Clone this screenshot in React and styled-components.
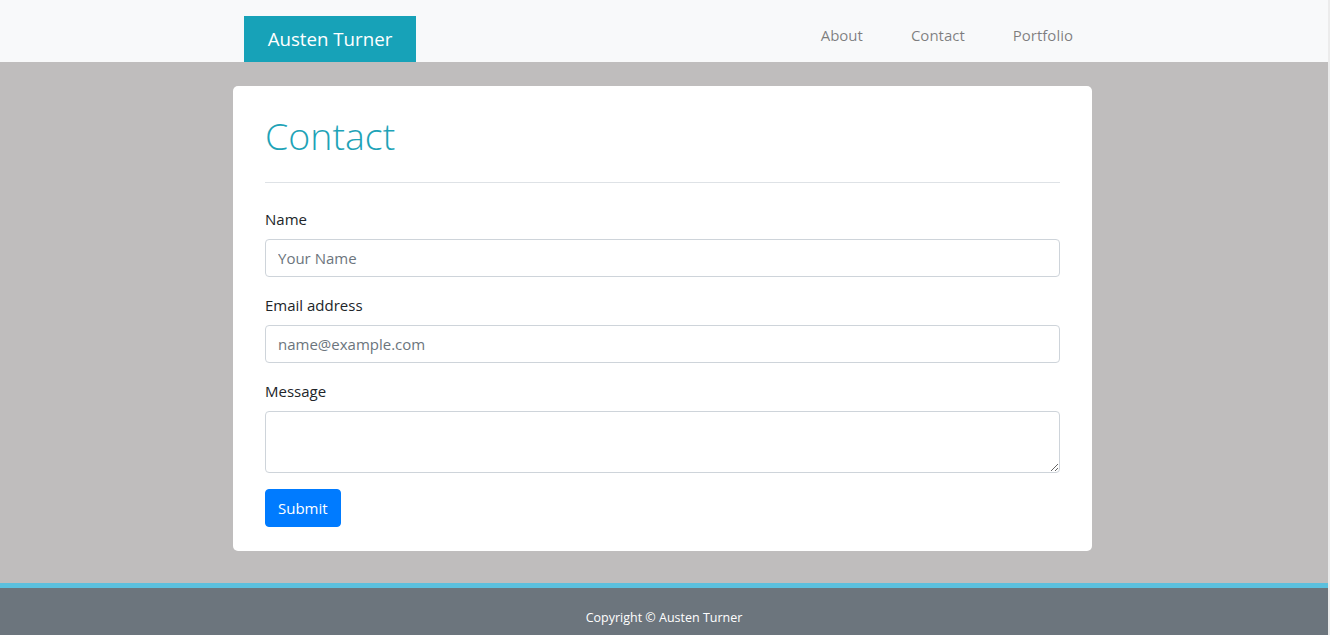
import styled, { createGlobalStyle } from 'styled-components'

const GlobalStyle = createGlobalStyle`
  * {
    box-sizing: border-box;
  }
  html {
    background: #ececec;
  }
  body {
    margin: 0 2px 0 0;
    font-family: 'Segoe UI', 'Open Sans', 'Liberation Sans', sans-serif;
    font-size: 15px;
    line-height: 24px;
    color: #212529;
    background: #bfbdbd;
  }
`

const Nav = styled.nav`
  background-color: #f8f9fa;
  height: 62px;
`
const NavInner = styled.div`
  width: 862px;
  height: 100%;
  margin: 0 auto;
  padding: 0 22px 0 11px;
  display: flex;
  justify-content: space-between;
`
const Brand = styled.a`
  align-self: flex-end;
  display: flex;
  align-items: center;
  justify-content: center;
  width: 172px;
  height: 46px;
  padding-bottom: 1px;
  background-color: #17a2b8;
  color: #fff;
  font-size: 18.7px;
  text-decoration: none;
`
const NavLinks = styled.div`
  display: flex;
  align-items: center;
  gap: 48px;
  padding-top: 8px;
`
const NavLink = styled.a`
  color: rgba(0, 0, 0, 0.5);
  font-size: 15px;
  text-decoration: none;

  &:hover {
    color: rgba(0, 0, 0, 0.7);
  }
`

const Main = styled.main`
  padding: 24px 3px 32px 0;
`
const Card = styled.section`
  width: 859px;
  margin: 0 auto;
  background: #fff;
  border-radius: 5px;
  padding: 26px 32px 24px;
`
const Title = styled.h1`
  margin: 0;
  font-size: 37.5px;
  font-weight: 300;
  line-height: 48px;
  color: #1ea3b7;
`
const Rule = styled.hr`
  margin: 22px 0 24px;
  border: 0;
  border-top: 1px solid #dee2e6;
`
const Group = styled.div`
  margin-bottom: 16px;
`
const Label = styled.label`
  display: block;
  margin-bottom: 8px;
`
const Input = styled.input`
  display: block;
  width: 100%;
  height: 38px;
  padding: 6px 12px;
  font: inherit;
  color: #495057;
  border: 1px solid #ced4da;
  border-radius: 4px;
  outline: none;

  &::placeholder {
    color: #6c757d;
  }
`
const TextArea = styled.textarea`
  display: block;
  width: 100%;
  height: 62px;
  padding: 6px 12px;
  font: inherit;
  border: 1px solid #ced4da;
  border-radius: 4px;
  outline: none;
`
const SubmitBtn = styled.button`
  display: block;
  height: 38px;
  padding: 0 12px;
  font: inherit;
  color: #fff;
  background-color: #007bff;
  border: 1px solid #007bff;
  border-radius: 4px;
  cursor: pointer;
`

const Stripe = styled.div`
  height: 5px;
  background: #5bc0de;
`
const Footer = styled.footer`
  background: #6c757d;
  color: #fff;
  text-align: center;
  font-size: 12.5px;
  line-height: 19px;
  padding: 20px 0;
`

const App = () => {
  return (
    <>
      <GlobalStyle />
      <Nav>
        <NavInner>
          <Brand href='#'>Austen Turner</Brand>
          <NavLinks>
            <NavLink href='#'>About</NavLink>
            <NavLink href='#'>Contact</NavLink>
            <NavLink href='#'>Portfolio</NavLink>
          </NavLinks>
        </NavInner>
      </Nav>
      <Main>
        <Card>
          <Title>Contact</Title>
          <Rule />
          <form onSubmit={(e) => e.preventDefault()}>
            <Group>
              <Label htmlFor='name'>Name</Label>
              <Input id='name' type='text' placeholder='Your Name' />
            </Group>
            <Group>
              <Label htmlFor='email'>Email address</Label>
              <Input id='email' type='email' placeholder='name@example.com' />
            </Group>
            <Group>
              <Label htmlFor='message'>Message</Label>
              <TextArea id='message' rows={2} />
            </Group>
            <SubmitBtn type='submit'>Submit</SubmitBtn>
          </form>
        </Card>
      </Main>
      <Stripe />
      <Footer>Copyright © Austen Turner</Footer>
    </>
  )
}

export default App
